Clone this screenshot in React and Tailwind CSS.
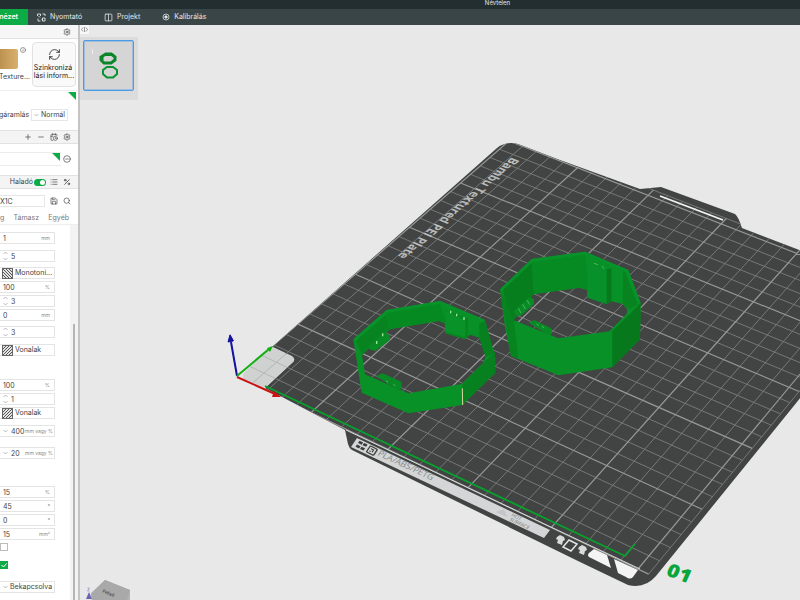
import { CalendarClock, CircleMinus, Columns2, Info, List, Minus, Percent, Plus, RefreshCw, Save, Search, Settings } from 'lucide-react';

const TABS = [
  { label: 'Nyomtató', icon: 'printer', pad: 'pl-[9px]' },
  { label: 'Projekt', icon: 'project', pad: 'pl-[22px]' },
  { label: 'Kalibrálás', icon: 'calib', pad: 'pl-[22px]' },
];

const FIELDS = [
  { id: 'f1', name: 'Vastagság', value: '1', unit: 'mm', gap: 'mt-0' },
  { id: 'f2', name: 'Falak', value: '5', spin: true, gap: 'mt-1.5' },
  { id: 'f3', name: 'Felső minta', value: 'Monotoni...', pattern: 'back', gap: 'mt-[5px]' },
  { id: 'f4', name: 'Felső sűrűség', value: '100', unit: '%', gap: 'mt-0.5' },
  { id: 'f5', name: 'Felső rétegek', value: '3', spin: true, gap: 'mt-0.5' },
  { id: 'f6', name: 'Felső vastagság', value: '0', unit: 'mm', gap: 'mt-0.5' },
  { id: 'f7', name: 'Alsó rétegek', value: '3', spin: true, gap: 'mt-[5px]' },
  { id: 'f8', name: 'Alsó minta', value: 'Vonalak', pattern: 'fwd', gap: 'mt-1.5' },
  { id: 'f9', name: 'Kitöltés', value: '100', unit: '%', gap: 'mt-[23px]' },
  { id: 'f10', name: 'Kitöltés szorzó', value: '1', spin: true, gap: 'mt-0.5' },
  { id: 'f11', name: 'Kitöltés minta', value: 'Vonalak', pattern: 'fwd', gap: 'mt-0.5' },
  { id: 'f12', name: 'Horgony', value: '400', unit: 'mm vagy %', drop: true, gap: 'mt-1.5' },
  { id: 'f13', name: 'Horgony max', value: '20', unit: 'mm vagy %', drop: true, gap: 'mt-2.5' },
  { id: 'f14', name: 'Átfedés', value: '15', unit: '%', gap: 'mt-[27px]' },
  { id: 'f15', name: 'Irány', value: '45', unit: '°', gap: 'mt-0.5' },
  { id: 'f16', name: 'Híd iránya', value: '0', unit: '°', gap: 'mt-0.5' },
  { id: 'f17', name: 'Küszöb', value: '15', unit: 'mm²', gap: 'mt-0.5' },
];

/* ---------- build plate perspective ---------- */

// corners of the 250 x 250 grid on the canvas: front left, front right, back right, back left
const QUAD = [[237, 377], [638, 569], [875, 284], [509, 141]];

function makeProjector([p0, p1, p2, p3]) {
  const dx1 = p1[0] - p2[0], dx2 = p3[0] - p2[0], sx = p0[0] - p1[0] + p2[0] - p3[0];
  const dy1 = p1[1] - p2[1], dy2 = p3[1] - p2[1], sy = p0[1] - p1[1] + p2[1] - p3[1];
  const det = dx1 * dy2 - dx2 * dy1;
  const g = (sx * dy2 - dx2 * sy) / det;
  const h = (dx1 * sy - sx * dy1) / det;
  return (x, y) => {
    const u = x / 250, v = y / 250;
    const w = g * u + h * v + 1;
    return [
      ((p1[0] - p0[0] + g * p1[0]) * u + (p3[0] - p0[0] + h * p3[0]) * v + p0[0]) / w,
      ((p1[1] - p0[1] + g * p1[1]) * u + (p3[1] - p0[1] + h * p3[1]) * v + p0[1]) / w,
    ];
  };
}

const project = makeProjector(QUAD);

function seg(x1, y1, x2, y2) {
  const a = project(x1, y1), b = project(x2, y2);
  return `M${a[0].toFixed(1)} ${a[1].toFixed(1)}L${b[0].toFixed(1)} ${b[1].toFixed(1)}`;
}

const STEPS = Array.from({ length: 26 }, (_, i) => i * 10);
const both = (n) => seg(n, 0, n, 256) + seg(0, n, 256, n);
const MINOR = STEPS.filter((n) => n % 50).map(both).join('') + seg(256, 0, 256, 256) + seg(0, 256, 256, 256);
const MAJOR = STEPS.filter((n) => n % 50 === 0).map(both).join('');

const PLATE = 'M272 347L497 148Q506 141 518 144L560 160L640 189L661 187L735 214Q738 216 742 228L810 254V386L656 576Q645 589 628 585L580 562L352 450Q349 448 348 444L345 430L265 388L294 361Q294 358 290 356Z';

function Plate() {
  return (
    <g>
      <defs>
        <clipPath id="plate"><path d={PLATE} /></clipPath>
        <clipPath id="notch"><path d="M271 346L292 356Q296 359 293 362L265 388L243 379V374Z" /></clipPath>
      </defs>
      <path d={PLATE} fill="#424443" />
      <g clipPath="url(#notch)">
        <rect x="236" y="340" width="62" height="52" fill="#d0d1d1" />
        <path d={MINOR} stroke="#b4b5b5" strokeWidth="1" fill="none" />
      </g>
      <g clipPath="url(#plate)" fill="none">
        <path d={MINOR} stroke="#7c7e7d" strokeWidth="0.9" />
        <path d={MAJOR} stroke="#969897" strokeWidth="1.2" />
      </g>
      <path d="M660 196L723 220" stroke="#f2f2f2" strokeWidth="1.8" />

      <text transform="matrix(-.74 .64 -.96 -.4 512 157)" fontFamily="Open Sans, sans-serif" fontWeight="700" fontSize="12" fill="#b9bbbb">
        Bambu Textured PEI Plate
      </text>

      {/* front handle */}
      <path d="M346 430L555 529L640 569" stroke="#d6d8d8" strokeWidth="1" fill="none" />
      <path d="M357 438L550 530L544 538L351 447Z" fill="#d3d5d6" />
      <g transform="matrix(.9 .43 -.5 .75 360 440)" stroke="#3c3e3d" fill="none">
        <path d="M0 1h4v3h-4zM5 1h4v3h-4zM0 6h4v3h-4zM5 6h4v3h-4z" fill="#3c3e3d" stroke="none" />
        <rect x="12" y="1" width="8" height="8" rx="1" strokeWidth="1.3" />
        <path d="M14 3.500h3v3M14 6.500h1.500" strokeWidth="1.2" />
      </g>
      <text transform="matrix(.9 .42 -.55 .8 377 455)" fontFamily="Open Sans, sans-serif" fontSize="9" fill="#858889">PLA/ABS/PETG</text>
      <text transform="matrix(.9 .42 -.55 .8 511 516)" fontFamily="Open Sans, sans-serif" fontSize="5" fill="#6f7273">
        <tspan x="0" y="0">HOT</tspan>
        <tspan x="1" y="5">SURFACE</tspan>
      </text>
      <path d="M504 509L507 517L496 512Z" fill="#c3c5c6" />
      <g fill="#d9dbdb">
        <path d="M557 537l3-2 4 2 1 3-2 1-1 4-5-2 1-3-2-1z" />
        <path d="M579 547l3-2 4 2 1 3-2 1-1 4-5-2 1-3-2-1z" />
      </g>
      <path d="M569 540L577 544L571 551L563 547Z" stroke="#e3e5e5" strokeWidth="1.5" fill="none" />
      <path d="M594 549L607 555L611 568L589 557Q587 555 589 553Z" fill="#f4f4f4" />
      <path d="M614 559L638 570L633 577Q630 580 626 577L618 573Z" fill="#f4f4f4" />

      <path d="M265 386L625 556L635 544" stroke="#06a32c" strokeWidth="1.8" fill="none" />
    </g>
  );
}

function Axes() {
  return (
    <g strokeWidth="2" fill="none">
      <path d="M237 376L231 342" stroke="#1512a0" />
      <path d="M228 342L230 334L234 341Z" fill="#1512a0" stroke="none" />
      <path d="M228 342L230 335L233 341Z" stroke="#1512a0" strokeWidth="1" />
      <path d="M237 376L269 349" stroke="#10b010" />
      <path d="M267 348L273 346L270 352Z" fill="#10b010" />
      <path d="M237 377L275 394" stroke="#c81313" />
      <path d="M274 391L281 397L272 397Z" fill="#c81313" />
    </g>
  );
}

// both rings are drawn on one sheet at three times the canvas size
function Rings() {
  return (
    <g transform="translate(340 240) scale(.33333)">
      {/* flat ring */}
      <path fillRule="evenodd" fill="#079126" d="M40 298L140 210L300 183L435 240L466 355V398L367 495L205 520L65 458ZM66 345L90 322L150 268L296 243L314 250L316 280L375 298L390 284L418 293L437 350L430 368L365 432L205 460L75 403Z" />
      <path fill="#078420" d="M48 302L140 222L148 266L66 345Z" />
      <path fill="#058a22" d="M140 210L300 190L318 250L296 243L148 267Z" />
      <path fill="#07801f" d="M367 434L430 368L465 335V398L367 495Z" />
      <path fill="#07801f" d="M418 250L435 242L462 340L437 350L418 293Z" />
      <path fill="#08932a" d="M40 298L140 210L300 183L435 240L428 246L298 192L142 219L48 302Z" />
      <path fill="#07841f" d="M316 210L384 236V288L375 298L316 280Z" />
      <path fill="#089228" d="M316 210L376 240V292L316 276Z" />
      <path fill="#088b24" d="M85 318L132 276L150 286V300L106 333L88 328Z" />
      <path fill="#088b24" d="M108 408L128 400L184 425L186 446L170 448Z" />
      <path stroke="#9fe39f" strokeWidth="4" d="M332 212v8M350 221v8M372 231v9M110 303v9M128 280v9" />
      <path stroke="#4fb562" strokeWidth="3" d="M138 423l6 3M160 434l6 3" />
      <path stroke="#d9d6a5" strokeWidth="3" d="M367 445L368 495" />

      {/* tall ring */}
      <path fillRule="evenodd" fill="#079126" d="M480 148L575 57L735 35L865 90L902 190L900 298L817 382L655 406L513 348L495 260ZM520 240L655 295L808 274L860 222L862 208L848 192L815 184L800 192L742 173L742 150L718 143L582 162L522 206Z" />
      <path fill="#077e1e" d="M488 150L575 68L582 162L522 240L508 225Z" />
      <path fill="#058b22" d="M575 66L735 42L745 150L718 143L582 162Z" />
      <path fill="#07781b" d="M817 274L902 190L900 298L817 382Z" />
      <path fill="#07841f" d="M850 94L866 92L900 190L868 208L848 192Z" />
      <path fill="#07841f" d="M480 148L522 240L535 355L513 348Z" />
      <path fill="#08932a" d="M480 148L575 57L735 35L865 90L902 190L893 193L856 96L733 44L578 66L488 151Z" />
      <path fill="#08902a" d="M742 72L800 88V192L742 172Z" />
      <path fill="#077a1c" d="M800 88L814 84V184L800 192Z" />
      <path fill="#088b24" d="M522 212L568 172L582 178V192L542 228L525 224Z" />
      <path fill="#088b24" d="M566 248L582 240L634 265L634 284L620 282Z" />
      <path stroke="#4fb562" strokeWidth="3" d="M535 205l8 14M548 193l8 14M561 180l8 14M590 252l6 4M606 259l6 4M762 70l12 4M786 78l6 8" />
    </g>
  );
}

function Scene() {
  return (
    <svg className="h-full w-full block" viewBox="80 25 720 575" preserveAspectRatio="xMinYMin slice">
      <Plate />
      <Axes />
      <Rings />
      <text transform="matrix(1 .36 -.38 .85 665 575)" fontFamily="Open Sans, sans-serif" fontWeight="800" fontSize="20" fill="#08a63a">01</text>
      {/* view cube */}
      <path d="M92 600L91 593L105 580L130 590V600Z" fill="#b4b4b4" />
      <path d="M91 594L105 580L130 590L127 600H92Z" fill="#a9a9a9" />
      <text transform="matrix(.9 .4 -.4 .8 102 592)" fontFamily="Open Sans, sans-serif" fontWeight="700" fontSize="5" fill="#555">Felső</text>
      <path d="M86 599L89 592L92 599Z" fill="#6a62b8" />
      <path d="M87.5 588h2l-2 3h2" stroke="#8d88c9" strokeWidth=".7" fill="none" />
    </svg>
  );
}

/* ---------- small parts ---------- */

function TabIcon({ kind }) {
  if (kind === 'project') return <Columns2 size={9} strokeWidth={2} />;
  if (kind === 'calib') {
    return (
      <svg width="8" height="8" viewBox="0 0 16 16" fill="none" stroke="currentColor" strokeWidth="1.5">
        <circle cx="8" cy="8" r="6" />
        <circle cx="8" cy="8" r="2.5" fill="currentColor" />
      </svg>
    );
  }
  return (
    <svg width="9" height="9" viewBox="0 0 18 18" fill="none" stroke="currentColor" strokeWidth="1.8">
      <path d="M1 6V2h6v4M11 2h5v4M2 11v5h5M3 6l3 3M11 10h5v6h-5zM11 13h-2" />
    </svg>
  );
}

function Pattern({ kind }) {
  return (
    <svg className="shrink-0" width="11" height="11" viewBox="0 0 11 11">
      <rect x=".5" y=".5" width="10" height="10" fill="#e4e4e4" stroke="#666" />
      <path
        d={kind === 'back' ? 'M1 7L4 10M1 4L7 10M1 1L10 10M4 1L10 7M7 1L10 4' : 'M1 4L4 1M1 7L7 1M1 10L10 1M4 10L10 4M7 10L10 7'}
        stroke="#555"
        strokeWidth="1"
      />
    </svg>
  );
}

function Chevrons({ down }) {
  return (
    <svg className="shrink-0" width="5" height="10" viewBox="0 0 5 10" fill="none" stroke="#aaa" strokeWidth=".8">
      {down ? <path d="M.5 4L2.5 6L4.5 4" /> : <path d="M.5 3L2.5 1L4.5 3M.5 7L2.5 9L4.5 7" />}
    </svg>
  );
}

function Field({ f }) {
  return (
    <div className={`${f.gap} flex h-3 shrink-0 items-center border border-l-0 border-[#e4e4e4] bg-white pr-1 ${f.pattern ? 'gap-0.5 pl-0.5' : 'gap-[3px] pl-[3px]'}`}>
      {f.pattern && <Pattern kind={f.pattern} />}
      {f.spin && <Chevrons />}
      {f.drop && <Chevrons down />}
      {f.pattern ? (
        <select aria-label={f.name} className="-mr-1 h-full w-full min-w-0 appearance-none bg-transparent outline-none">
          <option>{f.value}</option>
        </select>
      ) : (
        <input id={f.id} aria-label={f.name} defaultValue={f.value} className={`h-full min-w-0 bg-transparent outline-none ${f.drop ? 'w-[14px] shrink-0' : 'w-full'}`} />
      )}
      {f.unit && <span className={`shrink-0 whitespace-nowrap text-[5px] text-[#888] ${f.drop ? '-ml-[3px]' : ''}`}>{f.unit}</span>}
    </div>
  );
}

function Sidebar() {
  return (
    <aside className="flex w-20 shrink-0 flex-col overflow-hidden border-r-2 border-[#c4c4c4] bg-white text-[7px] leading-[8px] text-[#444]">
      <div className="flex h-[14px] shrink-0 items-center justify-end border-b border-[#e2e2e2] bg-[#f6f6f6] pr-[7px]">
        <button aria-label="Beállítások"><Settings size={8} /></button>
      </div>

      <div className="flex h-[51px] shrink-0 items-start pt-[3px]">
        <div className="flex w-[30px] shrink-0 flex-col pt-[7px]">
          <div className="flex gap-0.5">
            <div className="h-5 w-[18px] shrink-0 rounded-r-xs bg-linear-to-r from-[#bd9250] to-[#d8b06c]" />
            <Info size={6} className="-mt-0.5 shrink-0" />
          </div>
          <span className="mt-1 -ml-px whitespace-nowrap">Texture...</span>
        </div>
        <button className="ml-0.5 flex h-[45px] w-11 shrink-0 flex-col items-center rounded-sm border border-[#e2e2e2] bg-[#f9f9f9] pt-[5px] text-[#222]">
          <RefreshCw size={13} strokeWidth={1.5} />
          <span className="mt-[3px] text-left whitespace-nowrap">Szinkronizá<br />lási inform...</span>
        </button>
      </div>

      <div className="flex h-10 shrink-0 flex-col border-t border-[#eee]">
        <svg className="mt-px mr-0.5 self-end" width="8" height="8" viewBox="0 0 8 8"><path d="M0 0H8V8Z" fill="#0cab46" /></svg>
        <div className="mt-[9px] flex items-center gap-0.5 whitespace-nowrap">
          <label htmlFor="flow" className="-ml-px w-[30px]">gáramlás</label>
          <div className="flex h-3 w-[37px] items-center gap-0.5 border border-[#e6e6e6] pl-0.5">
            <Chevrons down />
            <select id="flow" className="w-full min-w-0 appearance-none bg-transparent outline-none"><option>Normál</option></select>
          </div>
        </div>
      </div>

      <div className="flex h-[14px] shrink-0 items-center justify-end gap-[5px] border-y border-[#e2e2e2] bg-[#f4f4f4] pr-[7px]">
        <button aria-label="Hozzáadás"><Plus size={8} /></button>
        <button aria-label="Eltávolítás"><Minus size={8} /></button>
        <button aria-label="Szinkron"><CalendarClock size={8} /></button>
        <button aria-label="Filament"><Settings size={8} /></button>
      </div>
      <div className="flex h-[31px] shrink-0 items-start pt-2">
        <div className="flex h-[14px] w-[61px] justify-end border-y border-[#ececec]">
          <svg width="9" height="8" viewBox="0 0 9 8"><path d="M0 0H8V8Z" fill="#0cab46" /></svg>
        </div>
        <button aria-label="Továbbiak" className="mt-[3px] ml-0.5"><CircleMinus size={8} /></button>
      </div>

      <div className="flex h-[14px] shrink-0 items-center justify-end border-y border-[#e2e2e2] bg-[#f4f4f4] pr-[7px]">
        <label htmlFor="adv">Haladó</label>
        <input id="adv" type="checkbox" defaultChecked className="peer sr-only" />
        <label htmlFor="adv" aria-hidden="true" className="ml-px flex h-[7px] w-3 items-center justify-end rounded-full bg-[#0cab46] p-px">
          <span className="h-[5px] w-[5px] rounded-full bg-white" />
        </label>
        <button aria-label="Lista" className="ml-1"><List size={8} /></button>
        <button aria-label="Összehasonlítás" className="ml-[5px]"><Percent size={8} strokeWidth={2.5} /></button>
      </div>

      <div className="mt-1.5 flex shrink-0 items-center">
        <input aria-label="Profil" defaultValue="X1C" className="h-3 w-[45px] border border-l-0 border-[#e6e6e6] outline-none" />
        <button aria-label="Mentés" className="ml-[5px]"><Save size={8} /></button>
        <button aria-label="Keresés" className="ml-[5px]"><Search size={8} /></button>
      </div>
      <nav className="mt-1 flex h-[14px] shrink-0 items-center justify-between border-b border-[#eee] pr-[9px] text-[#777]">
        <a href="#g">g</a>
        <a href="#tamasz">Támasz</a>
        <a href="#egyeb">Egyéb</a>
      </nav>

      <div className="flex min-h-0 flex-1 justify-between overflow-hidden">
        <div className="mt-[7px] flex w-[55px] flex-col">
          {FIELDS.map((f) => <Field key={f.id} f={f} />)}
          <input type="checkbox" aria-label="Vasalás" className="mt-[3px] h-2 w-2 shrink-0 appearance-none border border-[#bbb]" />
          <label className="relative mt-2.5 h-2 w-2 shrink-0 bg-[#0cab46]">
            <input type="checkbox" aria-label="Ritkítás" defaultChecked className="absolute inset-0 appearance-none" />
            <svg className="block" width="8" height="8" viewBox="0 0 8 8"><path d="M1.5 4L3.5 6L6.5 2.5" stroke="#fff" fill="none" /></svg>
          </label>
          <div className="mt-3 flex h-3 shrink-0 items-center gap-0.5 border border-l-0 border-[#e4e4e4] pl-[3px]">
            <Chevrons down />
            <select aria-label="Üzemmód" className="w-full min-w-0 appearance-none bg-transparent outline-none"><option>Bekapcsolva</option></select>
          </div>
        </div>
        <div className="flex w-2 justify-center bg-[#f3f3f3]">
          <div className="mt-[99px] w-0.5 bg-[#b5b5b5]" />
        </div>
      </div>
    </aside>
  );
}

export default function App() {
  return (
    <div className="flex h-screen flex-col overflow-hidden bg-[#e8e8e8] font-['Inter','Open_Sans',sans-serif]">
      <header className="shrink-0 text-[7px] text-[#e4e8e8]">
        <div className="flex h-[9px] items-start justify-center overflow-hidden bg-[#232e31] pl-[195px] text-[6px] leading-[5px]">
          Névtelen
        </div>
        <nav className="flex h-4 items-center bg-[#3a4548] leading-[16px]">
          <button className="flex h-full w-7 items-center justify-end bg-[#0cab46] pr-2.5 font-semibold text-white">nézet</button>
          {TABS.map((t) => (
            <button key={t.label} className={`${t.pad} flex h-full items-center gap-1`}>
              <TabIcon kind={t.icon} />
              {t.label}
            </button>
          ))}
        </nav>
      </header>

      <div className="flex min-h-0 flex-1">
        <Sidebar />
        <main className="relative min-w-0 flex-1">
          <Scene />
          <div className="absolute top-0 left-0 flex flex-col items-start">
            <button aria-label="Oldalsáv" className="flex h-[9px] w-[9px] items-center justify-center bg-[#f8f8f8]">
              <svg width="7" height="5" viewBox="0 0 14 10" fill="none" stroke="#777" strokeWidth="1.5"><path d="M4 1L1 5L4 9M10 1L13 5L10 9M7 0V10" /></svg>
            </button>
            <div className="mt-[3px] h-[63px] w-[58px] bg-[#dcdcdc] pt-[3px] pl-[3px]">
              <button aria-label="Tálca" className="block h-[51px] w-[51px] rounded-xs border border-[#4d9be6] bg-[#d5d5d5] ring ring-[#4d9be6]/40 ring-inset">
                <svg width="49" height="49" viewBox="-1 -1 49 49" fill="none">
                  <path d="M7.5 7v5" stroke="#eee" />
                  <path d="M20 12.500H27L30 15V18L26 21H19L16 18V15Z" stroke="#0a8528" strokeWidth="3" />
                  <path d="M17 14V18M20 12H27" stroke="#0a8528" strokeWidth="3" />
                  <path d="M22 25H28L32 28V32L28 35.500H22L18 32V28Z" stroke="#0a9330" strokeWidth="2" />
                </svg>
              </button>
            </div>
          </div>
        </main>
      </div>
    </div>
  );
}
